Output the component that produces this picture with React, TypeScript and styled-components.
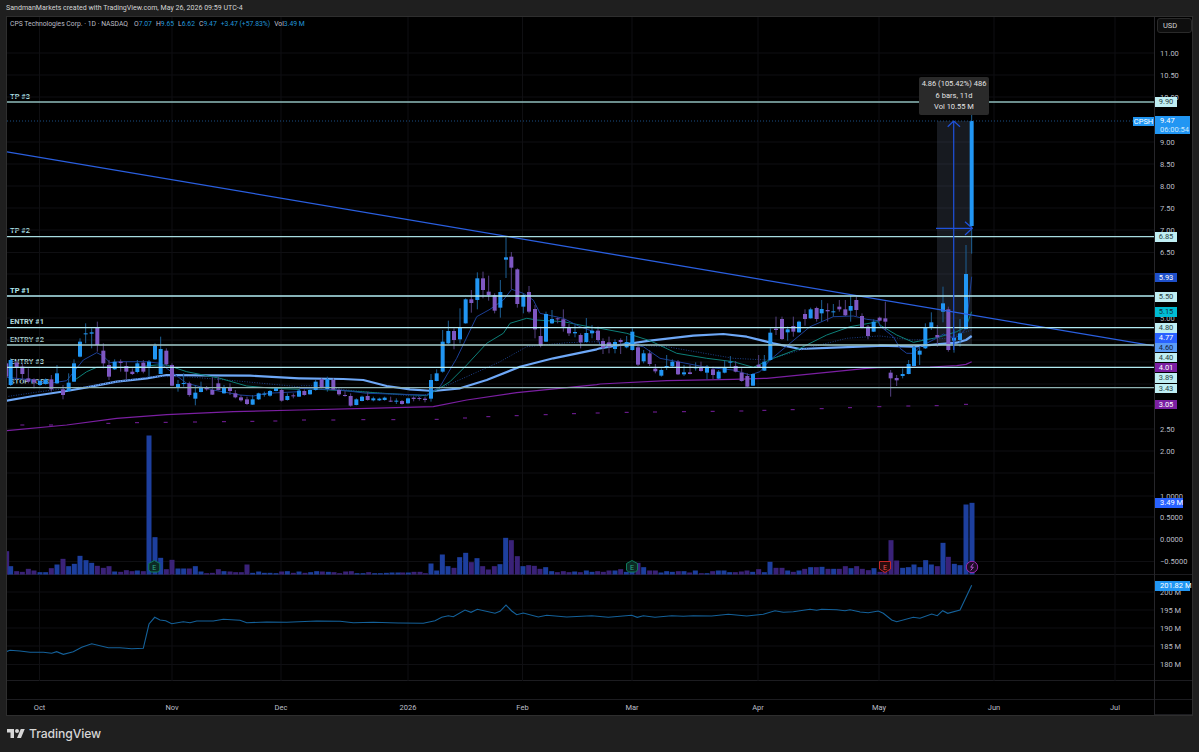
import React from 'react';
import styled, { createGlobalStyle } from 'styled-components';

// everything on the chart is kept in page pixels, panes just use a matching viewBox
const PLOT_LEFT = 7;
const PLOT_WIDTH = 1147;
const MAIN_TOP = 17;
const MAIN_HEIGHT = 558;
const IND_TOP = 575;
const IND_HEIGHT = 106;

const UP = '#2196f3';
const DOWN = '#7e57c2';
const UP_WICK = '#1d5f94';
const DOWN_WICK = '#54407f';

type Row = [number, number, number, number, number, number];
type Pt = [number, number];

interface Candle {
  x: number;
  bodyTop: number;
  bodyBottom: number;
  wickTop: number;
  wickBottom: number;
  up: boolean;
}

// rows were read off 3x crops, so each block has its own origin
const candles = (x0: number, y0: number, rows: Row[]): Candle[] =>
  rows.map(([z, bt, bb, wt, wb, up]) => ({
    x: x0 + z / 3,
    bodyTop: y0 + bt / 3,
    bodyBottom: y0 + bb / 3,
    wickTop: y0 + wt / 3,
    wickBottom: y0 + wb / 3,
    up: up === 1,
  }));

const line = (x0: number, y0: number, rows: Pt[]): Pt[] =>
  rows.map(([z, y]) => [x0 + z / 3, y0 + y / 3]);

const toPoints = (pts: Pt[]) => pts.map(([x, y]) => `${x.toFixed(1)},${y.toFixed(1)}`).join(' ');

const CANDLES: Candle[] = [
  ...candles(0, 280, [
    [19, 250, 290, 240, 295, 0], [32, 240, 315, 235, 318, 1], [50, 248, 262, 240, 300, 0],
    [67, 260, 282, 250, 300, 0], [85, 295, 305, 265, 310, 0], [102, 298, 308, 295, 325, 0],
    [120, 303, 315, 298, 318, 1], [137, 298, 312, 295, 314, 1], [154, 298, 328, 285, 335, 0],
    [171, 280, 310, 255, 312, 1], [189, 328, 345, 315, 358, 0], [206, 308, 333, 280, 335, 1],
    [222, 250, 305, 238, 306, 1], [240, 185, 230, 175, 232, 1], [257, 160, 163, 130, 190, 1],
    [275, 157, 161, 145, 205, 1], [292, 143, 195, 125, 215, 0], [310, 212, 250, 190, 265, 0],
    [327, 255, 290, 240, 300, 0], [344, 245, 268, 238, 270, 1], [362, 245, 249, 238, 275, 0],
    [379, 258, 275, 245, 298, 0], [397, 275, 282, 265, 285, 0], [412, 250, 276, 240, 280, 1],
    [430, 248, 275, 240, 280, 0], [447, 245, 260, 240, 290, 1], [465, 197, 238, 190, 240, 1],
    [482, 207, 282, 170, 283, 1], [499, 212, 253, 205, 258, 0], [516, 255, 317, 250, 318, 0],
    [534, 312, 324, 300, 335, 1], [551, 309, 312, 280, 320, 1], [568, 310, 345, 305, 350, 0],
    [586, 338, 356, 315, 376, 1], [603, 323, 336, 305, 337, 1], [620, 323, 328, 318, 332, 0],
    [637, 330, 344, 290, 345, 0], [655, 310, 330, 290, 331, 0], [672, 322, 340, 315, 341, 1],
    [690, 323, 333, 310, 345, 0], [706, 340, 352, 330, 355, 0], [723, 352, 361, 345, 365, 0],
    [741, 358, 372, 350, 375, 0], [758, 358, 374, 345, 375, 1], [776, 340, 358, 338, 360, 1],
    [793, 341, 343, 335, 350, 1], [810, 333, 347, 330, 350, 1], [828, 325, 333, 322, 334, 1],
    [845, 330, 362, 325, 365, 0], [862, 348, 360, 340, 362, 1], [880, 346, 349, 340, 355, 0],
    [897, 332, 350, 328, 351, 1],
  ]),
  ...candles(300, 230, [
    [13, 483, 495, 478, 497, 0], [30, 480, 493, 478, 494, 1], [47, 455, 480, 450, 482, 1],
    [65, 448, 473, 445, 475, 0], [82, 447, 477, 440, 485, 1], [100, 450, 479, 445, 480, 0],
    [117, 480, 493, 476, 497, 0], [135, 495, 498, 482, 500, 0], [152, 498, 527, 490, 530, 0],
    [169, 508, 525, 505, 526, 1], [186, 500, 513, 497, 514, 1], [203, 498, 510, 485, 512, 0],
    [220, 505, 511, 500, 514, 1], [238, 506, 511, 503, 513, 1], [254, 503, 510, 500, 512, 1],
    [272, 512, 514, 500, 516, 0], [289, 512, 514, 505, 522, 1], [306, 513, 522, 510, 524, 0],
    [324, 505, 520, 503, 521, 1], [341, 503, 507, 500, 514, 0], [358, 504, 507, 500, 512, 0],
    [375, 506, 510, 500, 517, 0], [393, 450, 506, 432, 515, 1], [410, 430, 453, 418, 454, 1],
    [428, 335, 425, 300, 428, 1], [445, 303, 340, 272, 342, 1], [462, 303, 330, 295, 358, 0],
    [480, 293, 328, 235, 340, 1], [497, 208, 280, 205, 281, 1], [514, 208, 219, 180, 248, 0],
    [532, 145, 210, 127, 238, 1], [549, 145, 180, 125, 205, 0], [566, 185, 195, 137, 212, 0],
    [584, 195, 242, 190, 250, 0], [601, 186, 233, 150, 263, 1], [618, 82, 89, 22, 144, 1],
    [634, 80, 113, 66, 178, 0], [652, 118, 222, 115, 233, 0], [670, 195, 230, 190, 250, 1],
    [687, 186, 245, 168, 250, 0], [705, 237, 298, 225, 325, 0], [722, 318, 347, 290, 352, 0],
    [738, 252, 335, 245, 336, 1], [756, 267, 280, 240, 282, 1], [773, 265, 268, 262, 280, 0],
    [790, 268, 290, 238, 305, 0], [807, 292, 310, 282, 318, 0], [825, 306, 310, 285, 322, 1],
    [842, 315, 337, 310, 355, 0], [859, 309, 336, 264, 338, 1], [876, 302, 310, 285, 325, 1],
    [894, 302, 330, 290, 335, 0],
  ]),
  ...candles(600, 280, [
    [9, 183, 203, 175, 222, 0], [27, 187, 200, 170, 220, 0], [45, 186, 207, 178, 220, 1],
    [62, 180, 186, 175, 222, 0], [80, 186, 202, 168, 205, 1], [97, 155, 210, 145, 212, 1],
    [114, 202, 254, 190, 258, 0], [131, 220, 244, 210, 250, 1], [149, 220, 252, 210, 258, 0],
    [166, 266, 274, 252, 280, 0], [184, 270, 287, 265, 290, 1], [200, 258, 260, 225, 270, 1],
    [217, 245, 259, 238, 262, 1], [234, 245, 283, 240, 285, 0], [252, 277, 283, 255, 288, 1],
    [270, 277, 282, 255, 283, 0], [287, 262, 264, 247, 272, 1], [303, 263, 273, 245, 275, 0],
    [321, 260, 278, 255, 298, 1], [339, 268, 285, 260, 298, 0], [356, 275, 296, 270, 298, 1],
    [374, 263, 278, 240, 280, 1], [391, 245, 247, 228, 262, 1], [407, 258, 275, 243, 277, 0],
    [425, 278, 303, 265, 305, 0], [442, 288, 320, 280, 322, 0], [459, 282, 317, 280, 318, 1],
    [476, 254, 262, 225, 263, 0], [493, 245, 272, 225, 273, 1], [511, 158, 240, 145, 242, 1],
    [528, 146, 150, 110, 165, 0], [546, 117, 177, 110, 180, 0], [563, 148, 157, 140, 182, 1],
    [580, 138, 155, 110, 170, 0], [597, 125, 157, 122, 158, 1], [615, 102, 117, 88, 137, 0],
    [632, 88, 115, 83, 116, 1], [650, 84, 117, 80, 125, 0], [665, 87, 100, 60, 125, 1],
    [683, 90, 94, 70, 125, 0], [700, 94, 96, 72, 110, 1], [718, 80, 88, 60, 95, 0],
    [736, 88, 106, 60, 108, 0], [752, 78, 92, 48, 125, 1], [769, 60, 90, 50, 108, 0],
    [786, 108, 143, 100, 145, 0], [804, 140, 168, 135, 178, 0], [821, 125, 155, 118, 156, 1],
    [839, 113, 122, 110, 125, 0], [856, 115, 125, 65, 150, 0],
  ]),
  ...candles(880, 250, [
    [32, 368, 385, 360, 440, 0], [50, 384, 391, 375, 408, 0], [68, 372, 378, 355, 385, 1],
    [86, 342, 372, 330, 373, 1], [102, 292, 348, 288, 350, 1], [119, 302, 314, 290, 345, 1],
    [136, 232, 295, 220, 297, 1], [154, 217, 232, 187, 240, 1], [172, 255, 262, 225, 290, 0],
    [189, 160, 185, 110, 217, 1], [205, 178, 300, 170, 305, 0], [222, 264, 272, 240, 308, 1],
    [240, 250, 270, 207, 290, 1], [258, 72, 237, -15, 238, 1], [275, -387, -72, -411, 11, 1],
  ]),
];

const FAST_LINE = toPoints([
  ...line(0, 280, [[18, 292], [100, 300], [150, 310], [200, 302], [250, 240], [290, 218], [310, 228], [330, 248], [360, 245], [440, 245], [480, 250], [520, 280], [560, 310], [640, 330], [720, 345], [760, 348], [800, 340], [897, 335]]),
  ...line(300, 230, [[0, 475], [120, 480], [200, 490], [380, 495], [420, 470], [470, 385], [530, 260], [570, 238], [610, 210], [635, 178], [670, 190], [700, 210], [720, 250], [790, 265], [840, 290], [890, 308]]),
  ...line(600, 280, [[0, 195], [100, 195], [130, 200], [180, 235], [320, 262], [400, 270], [450, 285], [480, 275], [510, 240], [570, 190], [630, 140], [700, 110], [760, 108], [800, 118], [835, 122]]),
  ...line(880, 250, [[0, 228], [40, 260], [60, 295], [80, 310], [100, 310], [120, 290], [175, 262], [190, 252], [222, 265], [240, 255], [258, 235], [275, 80]]),
]);

const TEAL_LINE = toPoints([
  ...line(0, 280, [[220, 303], [260, 275], [290, 262], [400, 262], [470, 255], [500, 255], [560, 275], [660, 295], [740, 318], [820, 325], [897, 328]]),
  ...line(300, 230, [[0, 475], [150, 483], [250, 490], [380, 497], [410, 480], [450, 455], [500, 405], [560, 340], [610, 310], [630, 280], [680, 265], [710, 270], [790, 275], [890, 295]]),
  ...line(600, 280, [[0, 145], [80, 160], [150, 182], [230, 220], [320, 235], [400, 245], [460, 262], [520, 235], [600, 205], [680, 165], [750, 140], [835, 125]]),
  ...line(880, 250, [[0, 225], [50, 255], [100, 277], [175, 262], [230, 245], [258, 230], [275, 185]]),
]);

const DOTTED_LINE = toPoints([
  ...line(0, 280, [[18, 350], [120, 335], [200, 325], [260, 320], [350, 305], [450, 290], [560, 290], [680, 300], [897, 320]]),
  ...line(300, 230, [[0, 467], [60, 467], [140, 480], [360, 500], [410, 480], [500, 440], [600, 395], [680, 350], [800, 338], [890, 335]]),
  ...line(600, 280, [[0, 190], [200, 200], [400, 235], [500, 240], [620, 205], [740, 175], [835, 168]]),
  ...line(880, 250, [[0, 258], [100, 270], [200, 265], [275, 240]]),
]);

const SLOW_LINE = toPoints([
  ...line(0, 280, [[18, 362], [100, 348], [200, 333], [260, 322], [350, 305], [440, 295], [500, 285], [600, 286], [750, 287], [897, 295]]),
  ...line(300, 230, [[0, 445], [130, 447], [190, 450], [260, 468], [330, 478], [400, 483], [480, 475], [560, 450], [660, 410], [760, 385], [890, 358]]),
  ...line(600, 280, [[0, 205], [60, 195], [150, 182], [280, 167], [370, 162], [440, 170], [520, 190], [600, 207], [700, 203], [835, 198]]),
  ...line(880, 250, [[0, 287], [100, 290], [170, 283], [230, 278], [258, 270], [275, 258]]),
]);

const LONG_LINE = toPoints([
  ...line(0, 280, [[18, 452], [200, 435], [350, 415], [500, 404], [700, 395], [897, 390]]),
  ...line(300, 230, [[0, 540], [200, 535], [400, 530], [500, 510], [650, 488], [800, 473], [890, 464]]),
  ...line(600, 280, [[0, 312], [200, 302], [400, 298], [500, 295], [650, 280], [800, 265], [835, 263]]),
  ...line(880, 250, [[0, 353], [150, 351], [230, 347], [258, 343], [275, 335]]),
]);

const DASHES: Pt[] = [
  ...line(0, 280, [[67, 435], [153, 435], [325, 430], [411, 428], [497, 427], [585, 426], [672, 425], [757, 424], [826, 423]]),
  ...line(300, 230, [[12, 570], [100, 570], [190, 569], [280, 569], [410, 568], [495, 564], [565, 560], [650, 557], [737, 554], [822, 551], [893, 549]]),
  ...line(600, 280, [[80, 397], [165, 396], [252, 395], [338, 394], [424, 393], [493, 391], [578, 389], [665, 386], [750, 383], [838, 380]]),
  ...line(880, 250, [[85, 468], [170, 467], [258, 463]]),
];

const OBV_LINE = toPoints([
  ...line(0, 520, [[18, 395], [30, 391], [60, 393], [90, 397], [130, 397], [155, 400], [170, 395], [190, 403], [220, 395], [245, 382], [275, 371], [325, 383], [360, 383], [395, 386], [430, 385], [447, 312], [464, 292], [480, 300], [497, 302], [515, 311], [550, 305], [570, 308], [590, 303], [640, 303], [670, 298], [720, 301], [740, 308], [800, 306], [860, 307], [950, 303], [1020, 304], [1060, 308], [1120, 307], [1195, 309]]),
  ...line(400, 520, [[0, 309], [70, 310], [105, 302], [125, 292], [145, 287], [160, 290], [195, 270], [213, 277], [232, 268], [285, 280], [300, 274], [318, 255], [335, 273], [350, 284], [370, 279], [415, 291], [440, 286], [500, 291], [575, 287], [625, 292], [695, 286], [712, 292], [730, 287], [765, 292], [815, 287], [850, 289], [880, 287], [935, 288], [985, 283], [1040, 288], [1090, 283], [1125, 272], [1150, 277], [1180, 275], [1230, 268], [1250, 271], [1265, 268], [1310, 269], [1335, 272], [1350, 269], [1378, 275]]),
  ...line(860, 490, [[0, 366], [25, 368], [55, 363], [70, 370], [95, 390], [110, 395], [160, 382], [180, 385], [215, 372], [232, 377], [248, 362], [263, 370], [300, 360], [335, 286]]),
]);

// volume: positive is an up day, negative a down day, height in 3x pixels
const bars = (x0: number, rows: Pt[]) => rows.map(([z, h]) => ({ x: x0 + z / 3, h: Math.abs(h) / 3, up: h > 0 }));

const VOLUME = [
  ...bars(0, [
    [20, -70], [32, 25], [50, -10], [67, -8], [85, -17], [102, -12], [120, 7], [137, 7], [154, -19], [171, 30], [189, -47], [206, 25], [223, 32], [240, 56], [258, 43], [275, 35], [292, -26], [310, -20], [327, -25], [344, 9], [362, -8], [379, -13], [396, -10], [412, 12], [430, -10], [447, 417], [465, 112], [482, 50], [499, -16], [516, -44], [534, 18], [551, 18], [568, -18], [586, 25], [603, 9], [620, -4], [637, -5], [655, -16], [672, 10], [690, -9], [707, -7], [724, -7], [741, -30], [758, 5], [776, 9], [793, 5], [810, 5], [828, 4], [845, -9], [862, 10], [880, -5], [897, 9],
    [915, -5], [932, 7], [950, 10], [967, -9], [985, 8], [1002, -7], [1019, -4], [1037, -9], [1054, -10], [1071, 4], [1089, 4], [1106, -7], [1124, 4], [1141, 4], [1159, 5], [1176, 6], [1194, 6],
  ]),
  ...bars(400, [
    [8, -6], [25, 6], [42, -8], [60, -8], [76, -4], [93, 33], [110, 12], [127, 60], [144, 25], [162, -20], [179, 52], [197, 65], [214, -37], [231, 49], [248, -25], [265, -15], [283, -25], [300, 31], [317, 110], [334, -103], [352, -55], [369, 25], [386, -28], [403, -26], [420, -17], [437, 22], [455, 10], [472, -7], [490, -10], [507, -7], [524, 9], [541, -7], [559, 12], [576, 8], [593, -10], [610, -8], [627, -12], [645, 12], [662, -16], [679, 8], [696, 8], [714, -35], [731, 22], [749, -12], [766, -12], [783, 6], [800, 10], [817, 8], [835, -10], [852, 10], [869, -6], [886, 12], [904, -4], [921, 4], [938, -10], [955, 12], [972, 12], [989, 7], [1006, -7], [1024, -9], [1041, -12], [1058, 8], [1076, -16], [1093, 7], [1110, 38], [1128, -20], [1146, -20], [1163, 12], [1180, -8], [1197, 12], [1214, -17], [1232, 22], [1249, -22], [1266, 23], [1284, -17], [1301, 17], [1318, -17], [1336, -25], [1353, 19], [1370, -25],
  ]),
  ...bars(860, [
    [7, -17], [25, -13], [42, 19], [60, -8], [75, -8], [93, -103], [110, -42], [128, 20], [145, 22], [162, 30], [180, 22], [197, 43], [214, 30], [232, -25], [249, 95], [265, -53], [283, 32], [300, 28], [318, 210], [336, 215],
  ]),
];

const VOLUME_BASE = 574.5;

const LEVELS = [
  { y: 102, color: '#8fbcbb' },
  { y: 236.7, color: '#a8dce0' },
  { y: 296, color: '#b2ebf2' },
  { y: 327.7, color: '#b2ebf2' },
  { y: 345, color: '#a3cccc' },
  { y: 367.3, color: '#b2ebf2' },
  { y: 387.7, color: '#8fb3b3' },
];

const LEVEL_LABELS = [
  { y: 96, text: 'TP #3', color: '#a8dce0' },
  { y: 230.7, text: 'TP #2', color: '#a8dce0' },
  { y: 290.5, text: 'TP #1', color: '#b2ebf2' },
  { y: 321.5, text: 'ENTRY #1', color: '#b2d8dc' },
  { y: 339, text: 'ENTRY #2', color: '#a3c4c6' },
  { y: 361.5, text: 'ENTRY #3', color: '#b2d8dc' },
  { y: 381.7, text: 'STOP LOSS', color: '#a3c4c6' },
];

const TIME_MARKS = [
  { x: 39.5, label: 'Oct' }, { x: 172, label: 'Nov' }, { x: 281, label: 'Dec' }, { x: 408, label: '2026' },
  { x: 522.5, label: 'Feb' }, { x: 632, label: 'Mar' }, { x: 758, label: 'Apr' }, { x: 879, label: 'May' },
  { x: 994, label: 'Jun' }, { x: 1115, label: 'Jul' },
];

const PRICE_TICKS = [
  { y: 53, label: '11.00' }, { y: 75, label: '10.50' }, { y: 97, label: '10.00' }, { y: 142, label: '9.00' },
  { y: 164, label: '8.50' }, { y: 186, label: '8.00' }, { y: 208, label: '7.50' }, { y: 230, label: '7.00' },
  { y: 252.5, label: '6.50' }, { y: 318, label: '5.00' }, { y: 429, label: '2.50' }, { y: 451, label: '2.00' },
  { y: 496, label: '1.0000' }, { y: 517, label: '0.5000' }, { y: 539, label: '0.0000' }, { y: 561.5, label: '\u22120.5000' },
];

const OBV_TICKS = [
  { y: 592, label: '200 M' }, { y: 610, label: '195 M' }, { y: 628, label: '190 M' }, { y: 646, label: '185 M' }, { y: 664.5, label: '180 M' },
];

const EXTRA_GRID = [274, 296, 340, 362, 384, 406, 473];

const LIGHT = '#bfeef3';
const PRICE_BADGES = [
  { y: 102, label: '9.90', bg: LIGHT, fg: '#28413f' },
  { y: 237, label: '6.85', bg: LIGHT, fg: '#28413f' },
  { y: 277.5, label: '5.93', bg: '#1e4fc9', fg: '#ffffff' },
  { y: 297, label: '5.50', bg: LIGHT, fg: '#28413f' },
  { y: 312, label: '5.15', bg: '#00bcd4', fg: '#10343a' },
  { y: 328, label: '4.80', bg: LIGHT, fg: '#28413f' },
  { y: 338, label: '4.77', bg: '#2962ff', fg: '#ffffff' },
  { y: 347.7, label: '4.60', bg: '#5b9cf6', fg: '#14233d' },
  { y: 357.7, label: '4.40', bg: LIGHT, fg: '#28413f' },
  { y: 367.7, label: '4.01', bg: '#7b1fa2', fg: '#ffffff' },
  { y: 378, label: '3.89', bg: LIGHT, fg: '#28413f' },
  { y: 388.3, label: '3.43', bg: LIGHT, fg: '#28413f' },
  { y: 404.7, label: '3.05', bg: '#7b1fa2', fg: '#ffffff' },
];

const GlobalStyle = createGlobalStyle`
  html, body {
    margin: 0;
    padding: 0;
    background: #1f1f1f;
  }
  body {
    font-family: Roboto, "Liberation Sans", Arial, sans-serif;
  }
`;

const Page = styled.div`
  width: 1199px;
  height: 752px;
  display: flex;
  flex-direction: column;
  overflow: hidden;
  background: #1f1f1f;
`;

const Credit = styled.div`
  height: 16px;
  padding-left: 6px;
  font-size: 7.05px;
  line-height: 16px;
  color: #d4d4d4;
`;

const Frame = styled.div`
  box-sizing: border-box;
  height: 700px;
  margin: 0 6px;
  border: 1px solid #2e2e2e;
  background: #000;
  display: grid;
  grid-template-columns: 1fr 38px;
  grid-template-rows: ${MAIN_HEIGHT}px ${IND_HEIGHT}px 19px 1fr;
`;

const Plot = styled.div`
  position: relative;
  overflow: hidden;
  box-shadow: inset 0 -1px 0 #1c1c20;
`;

const PlotSvg = styled.svg`
  position: absolute;
  inset: 0;
  width: 100%;
  height: 100%;
  z-index: 1;
`;

const Legend = styled.div`
  position: absolute;
  top: 3px;
  left: 3px;
  display: flex;
  gap: 4px;
  font-size: 6.8px;
  line-height: 9px;
  color: #bcbfc7;
  white-space: nowrap;
  z-index: 2;
`;

const LegendName = styled.span`
  margin-right: 2px;
`;

const LegendValue = styled.span`
  color: #2196d8;
`;

const LevelLabel = styled.div<{ $y: number; $color: string }>`
  position: absolute;
  left: 3px;
  top: ${(p) => p.$y - MAIN_TOP - 4.5}px;
  font-size: 7.5px;
  font-weight: 700;
  line-height: 9px;
  color: ${(p) => p.$color};
  white-space: nowrap;
`;

const MeasureTip = styled.div`
  position: absolute;
  left: ${919 - PLOT_LEFT}px;
  top: ${77 - MAIN_TOP}px;
  width: 70px;
  height: 38px;
  box-sizing: border-box;
  padding-top: 1px;
  background: #2a2a2a;
  border-radius: 2px;
  font-size: 7.5px;
  line-height: 11.6px;
  color: #e4e4e4;
  text-align: center;
  z-index: 3;
`;

const SymbolTag = styled.div`
  position: absolute;
  right: 0;
  top: ${116.5 - MAIN_TOP}px;
  width: 21px;
  height: 9px;
  background: #2196f3;
  font-size: 7.5px;
  line-height: 9px;
  color: #fff;
  text-align: center;
  z-index: 3;
`;

const Axis = styled.div`
  position: relative;
  border-left: 1px solid #26262a;
  overflow: visible;
  box-shadow: inset 0 -1px 0 #1c1c20;
`;

const Tick = styled.div<{ $top: number }>`
  position: absolute;
  left: 5px;
  top: ${(p) => p.$top - 4.5}px;
  font-size: 7.5px;
  line-height: 9px;
  color: #bcbfc7;
  white-space: nowrap;
`;

const PriceBadge = styled.div<{ $top: number; $bg: string; $fg: string }>`
  position: absolute;
  left: 0;
  top: ${(p) => p.$top - 4.8}px;
  width: 22px;
  height: 9.6px;
  background: ${(p) => p.$bg};
  color: ${(p) => p.$fg};
  font-size: 7.5px;
  line-height: 9.6px;
  text-align: center;
`;

const ValueBadge = styled.div<{ $top: number; $bg: string; $width: number }>`
  position: absolute;
  left: 0;
  top: ${(p) => p.$top - 4.8}px;
  box-sizing: border-box;
  width: ${(p) => p.$width}px;
  height: 9.6px;
  padding-left: 5px;
  background: ${(p) => p.$bg};
  color: #fff;
  font-size: 7.5px;
  line-height: 9.6px;
  white-space: nowrap;
`;

const LastPrice = styled.div`
  position: absolute;
  left: 0;
  top: ${116 - MAIN_TOP}px;
  box-sizing: border-box;
  width: 35px;
  height: 18px;
  padding-left: 5px;
  background: #2196f3;
  color: #fff;
  font-size: 7.5px;
  line-height: 9px;
  z-index: 2;
`;

const Countdown = styled.div`
  color: #c9e6fd;
`;

const CurrencyButton = styled.div`
  position: absolute;
  left: 2px;
  top: 1px;
  box-sizing: border-box;
  width: 35px;
  height: 15px;
  padding-left: 5px;
  border: 1px solid #2a2a2a;
  border-radius: 3px;
  background: #0e0e0e;
  color: #d4d4d4;
  font-size: 7.5px;
  line-height: 13px;
`;

const TimeAxis = styled.div`
  position: relative;
`;

const TimeLabel = styled.div<{ $x: number }>`
  position: absolute;
  left: ${(p) => p.$x - PLOT_LEFT}px;
  top: 3px;
  transform: translateX(-50%);
  font-size: 7.5px;
  line-height: 9px;
  color: #bcbfc7;
`;

const Footer = styled.div`
  flex: 1;
  display: flex;
  align-items: center;
  gap: 4px;
  padding: 0 0 1px 7px;
`;

const LogoText = styled.span`
  font-family: Inter, "Liberation Sans", sans-serif;
  font-size: 12.2px;
  font-weight: 500;
  letter-spacing: -0.1px;
  color: #d6d6d6;
`;

function TvMark() {
  return (
    <svg width="18" height="14" viewBox="0 0 36 28" fill="#d6d6d6">
      <path d="M14 22H7V11H0V4h14v18zM28 22h-8l7.5-18h8L28 22z" />
      <circle cx="20" cy="8" r="4" />
    </svg>
  );
}

function GridLines({ ys, top, bottom }: { ys: number[]; top: number; bottom: number }) {
  return (
    <g stroke="#0f0f12" strokeWidth="1">
      {ys.map((y) => (
        <line key={y} x1={PLOT_LEFT} x2={PLOT_LEFT + PLOT_WIDTH} y1={y} y2={y} />
      ))}
      {TIME_MARKS.map((m) => (
        <line key={m.label} x1={m.x} x2={m.x} y1={top} y2={bottom} />
      ))}
    </g>
  );
}

function CandleMark({ candle }: { candle: Candle }) {
  const height = Math.max(candle.bodyBottom - candle.bodyTop, 1);
  return (
    <g>
      <line
        x1={candle.x}
        x2={candle.x}
        y1={candle.wickTop}
        y2={candle.wickBottom}
        stroke={candle.up ? UP_WICK : DOWN_WICK}
        strokeWidth="1"
      />
      <rect x={candle.x - 2} y={candle.bodyTop} width="4" height={height} fill={candle.up ? UP : DOWN} />
    </g>
  );
}

function EarningsMark({ x, stroke, fill, color, down }: { x: number; stroke: string; fill: string; color: string; down?: boolean }) {
  // house shape for the upcoming kind, shield pointing down for the reported one
  const d = down
    ? `M${x - 5.5} 561.5h11v7.5l-5.5 3.5l-5.5-3.5z`
    : `M${x} 560.5l5.5 3v6.5l-2 2h-7l-2-2v-6.5z`;
  return (
    <g>
      <path d={d} fill={fill} stroke={stroke} strokeWidth="1" />
      <text x={x} y="569.5" textAnchor="middle" fontSize="7" fontFamily="Roboto, sans-serif" fill={color}>
        E
      </text>
    </g>
  );
}

function MainChart() {
  const grid = [...PRICE_TICKS.map((t) => t.y), ...EXTRA_GRID];
  return (
    <PlotSvg viewBox={`${PLOT_LEFT} ${MAIN_TOP} ${PLOT_WIDTH} ${MAIN_HEIGHT}`}>
      <GridLines ys={grid} top={MAIN_TOP} bottom={IND_TOP} />

      {VOLUME.map((bar) => (
        <rect
          key={bar.x}
          x={bar.x - 2.5}
          y={VOLUME_BASE - bar.h}
          width="5"
          height={bar.h}
          fill={bar.up ? '#1d3f9e' : '#3a2278'}
        />
      ))}

      <rect x="937" y="121" width="35" height="224" fill="#8ea4c8" fillOpacity="0.16" />

      <polyline points={LONG_LINE} fill="none" stroke="#7b1fa2" strokeWidth="1.2" />
      <polyline points={SLOW_LINE} fill="none" stroke="#6ea8f7" strokeWidth="2.2" strokeLinejoin="round" />
      <polyline points={DOTTED_LINE} fill="none" stroke="#1c3f86" strokeWidth="1" strokeDasharray="1 1.5" />
      <polyline points={TEAL_LINE} fill="none" stroke="#0d7f78" strokeWidth="1" />
      <polyline points={FAST_LINE} fill="none" stroke="#1c3f96" strokeWidth="1" />

      {DASHES.map(([x, y]) => (
        <rect key={x} x={x - 2} y={y - 0.5} width="4" height="1" fill="#7b1fa2" />
      ))}

      {CANDLES.map((c) => (
        <CandleMark key={c.x} candle={c} />
      ))}

      <line x1={PLOT_LEFT} x2={1133} y1="121" y2="121" stroke="#1a4f85" strokeWidth="1" strokeDasharray="1 2" />
      <line x1={PLOT_LEFT} x2={PLOT_LEFT + PLOT_WIDTH} y1="151.8" y2="345.9" stroke="#2a5fe0" strokeWidth="1.3" />

      {LEVELS.map((l) => (
        <line key={l.y} x1={PLOT_LEFT} x2={PLOT_LEFT + PLOT_WIDTH} y1={l.y} y2={l.y} stroke={l.color} strokeWidth="1.3" />
      ))}

      {/* measure tool arrows */}
      <g fill="none" stroke="#1f52dc" strokeWidth="1.2">
        <line x1="953.7" x2="953.7" y1="121" y2="350" />
        <polyline points="947.7,126.7 953.7,121 960,126.7" />
        <line x1="936" x2="972.3" y1="228.3" y2="228.3" />
        <polyline points="965,221.7 972.3,228.3 965,235" />
      </g>

      <EarningsMark x={154.3} stroke="#0f7a5c" fill="#0c2a24" color="#2fae88" />
      <EarningsMark x={632} stroke="#0f7a5c" fill="#0c2a24" color="#2fae88" />
      <EarningsMark x={885} stroke="#c62828" fill="#2c0c0e" color="#ef5350" down />
      <circle cx="972" cy="567" r="5.7" fill="#1e0d26" stroke="#9c27b0" strokeWidth="1" />
      <path d="M973.3 563.6l-2.6 3.6h2.6l-2.6 3.3" fill="none" stroke="#ba55d3" strokeWidth="1" />
    </PlotSvg>
  );
}

function ObvChart() {
  return (
    <PlotSvg viewBox={`${PLOT_LEFT} ${IND_TOP} ${PLOT_WIDTH} ${IND_HEIGHT}`}>
      <GridLines ys={OBV_TICKS.map((t) => t.y)} top={IND_TOP} bottom={IND_TOP + IND_HEIGHT} />
      <polyline points={OBV_LINE} fill="none" stroke="#14619a" strokeWidth="1.1" />
    </PlotSvg>
  );
}

export default function App() {
  return (
    <Page>
      <GlobalStyle />
      <Credit>SandmanMarkets created with TradingView.com, May 26, 2026 09:59 UTC-4</Credit>
      <Frame>
        <Plot>
          {LEVEL_LABELS.map((l) => (
            <LevelLabel key={l.text} $y={l.y} $color={l.color}>
              {l.text}
            </LevelLabel>
          ))}
          <MainChart />
          <Legend>
            <LegendName>CPS Technologies Corp. · 1D · NASDAQ</LegendName>
            <span>O<LegendValue>7.07</LegendValue></span>
            <span>H<LegendValue>9.65</LegendValue></span>
            <span>L<LegendValue>6.62</LegendValue></span>
            <span>C<LegendValue>9.47</LegendValue></span>
            <LegendValue>+3.47 (+57.83%)</LegendValue>
            <span>Vol<LegendValue>3.49 M</LegendValue></span>
          </Legend>
          <MeasureTip>
            <div>4.86 (105.42%) 486</div>
            <div>6 bars, 11d</div>
            <div>Vol 10.55 M</div>
          </MeasureTip>
          <SymbolTag>CPSH</SymbolTag>
        </Plot>

        <Axis>
          <CurrencyButton>USD</CurrencyButton>
          {PRICE_TICKS.map((t) => (
            <Tick key={t.label} $top={t.y - MAIN_TOP}>{t.label}</Tick>
          ))}
          {PRICE_BADGES.map((b) => (
            <PriceBadge key={b.label} $top={b.y - MAIN_TOP} $bg={b.bg} $fg={b.fg}>
              {b.label}
            </PriceBadge>
          ))}
          <LastPrice>
            <div>9.47</div>
            <Countdown>06:00:54</Countdown>
          </LastPrice>
          <ValueBadge $top={503 - MAIN_TOP} $bg="#2962ff" $width={28}>3.49 M</ValueBadge>
        </Axis>

        <Plot>
          <ObvChart />
        </Plot>

        <Axis>
          {OBV_TICKS.map((t) => (
            <Tick key={t.label} $top={t.y - IND_TOP}>{t.label}</Tick>
          ))}
          <ValueBadge $top={586 - IND_TOP} $bg="#2196f3" $width={35}>201.82 M</ValueBadge>
        </Axis>

        <Plot />
        <Axis />

        <TimeAxis>
          {TIME_MARKS.map((m) => (
            <TimeLabel key={m.label} $x={m.x}>{m.label}</TimeLabel>
          ))}
        </TimeAxis>
        <Axis />
      </Frame>
      <Footer>
        <TvMark />
        <LogoText>TradingView</LogoText>
      </Footer>
    </Page>
  );
}
